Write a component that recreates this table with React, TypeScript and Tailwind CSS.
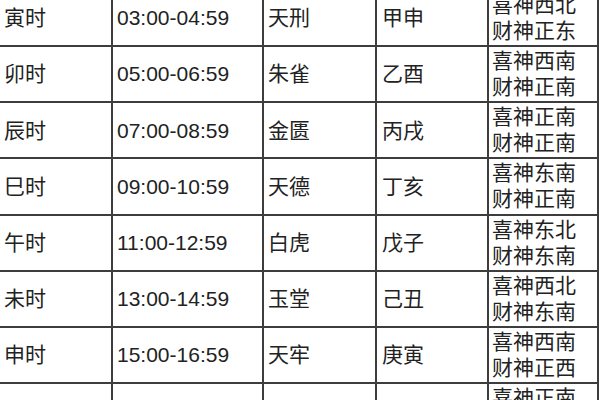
import { Fragment } from "react";

const rows = [
  ["寅时", "03:00-04:59", "天刑", "甲申", "喜神西北", "财神正东"],
  ["卯时", "05:00-06:59", "朱雀", "乙酉", "喜神西南", "财神正南"],
  ["辰时", "07:00-08:59", "金匮", "丙戌", "喜神正南", "财神正南"],
  ["巳时", "09:00-10:59", "天德", "丁亥", "喜神东南", "财神正南"],
  ["午时", "11:00-12:59", "白虎", "戊子", "喜神东北", "财神东南"],
  ["未时", "13:00-14:59", "玉堂", "己丑", "喜神西北", "财神东南"],
  ["申时", "15:00-16:59", "天牢", "庚寅", "喜神西南", "财神正西"],
  ["酉时", "17:00-18:59", "玄武", "辛卯", "喜神正南", "财神正西"],
];

const cell = "bg-white flex items-center pl-[4px] text-[21px] text-[#222] whitespace-nowrap";

export default function App() {
  return (
    <div
      className="w-[600px] h-[400px] overflow-hidden bg-white"
      style={{ fontFamily: '"Liberation Sans", "Noto Sans CJK SC", sans-serif' }}
    >
      <div className="-mt-[9.2px] w-[599px] grid grid-cols-[111px_149px_111px_110px_108px] auto-rows-[54.2px] gap-[2px] bg-[#3d3d3d] pr-[2px] pb-[2px]">
        {rows.map((r) => (
          <Fragment key={r[0]}>
            <div className={cell}>{r[0]}</div>
            <div className={cell + " text-[21.6px] text-[#2a2a2a]"}>{r[1]}</div>
            <div className={cell}>{r[2]}</div>
            <div className={cell + " pl-[5px]"}>{r[3]}</div>
            <div className="bg-white flex flex-col justify-center pl-[3px] text-[21px] leading-[26px] text-[#222] whitespace-nowrap">
              <span>{r[4]}</span>
              <span>{r[5]}</span>
            </div>
          </Fragment>
        ))}
      </div>
    </div>
  );
}
